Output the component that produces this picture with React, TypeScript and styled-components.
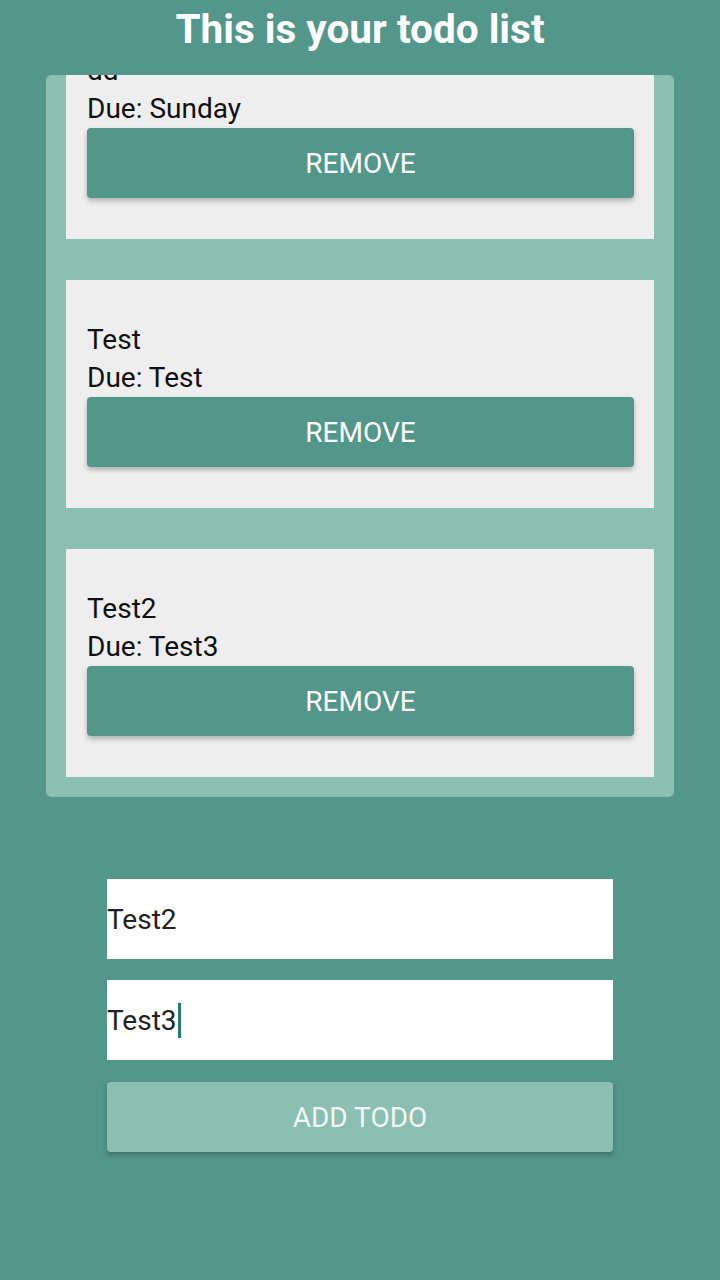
import React, { useLayoutEffect, useRef } from "react";
import styled, { createGlobalStyle } from "styled-components";

const Global = createGlobalStyle`
  html, body { margin: 0; padding: 0; background: #52978a; }
  body { font-family: Roboto, "Noto Sans", sans-serif; }
  * { box-sizing: border-box; }
`;

const Page = styled.div`
  width: 720px;
  height: 1280px;
  background: #52978a;
  display: flex;
  flex-direction: column;
  align-items: center;
  overflow: hidden;
`;

const Title = styled.h1`
  margin: 0;
  height: 75px;
  padding-top: 5px;
  font-size: 40.5px;
  line-height: 48px;
  font-weight: 700;
  color: #ffffff;
  text-align: center;
`;

const Panel = styled.div`
  width: 628px;
  height: 722px;
  background: #8abfb1;
  border-radius: 5px;
  padding: 20px;
  overflow-y: auto;
  scrollbar-width: none;
  &::-webkit-scrollbar { display: none; }
  display: flex;
  flex-direction: column;
  gap: 41px;
`;

const Item = styled.div`
  flex: none;
  background: #eeeeee;
  padding: 41px 20px 41px 21px;
  display: flex;
  flex-direction: column;
`;

const Line = styled.div`
  font-size: 28px;
  line-height: 38px;
  color: #111;
`;

const Button = styled.button<{ $light?: boolean }>`
  border: none;
  border-radius: 4px;
  background: ${(p) => (p.$light ? "#8abfb1" : "#52978a")};
  color: ${(p) => (p.$light ? "#f2f7f5" : "#ffffff")};
  font-family: Roboto, "Noto Sans", sans-serif;
  font-size: 28px;
  height: ${(p) => (p.$light ? "70px" : "70px")};
  width: 100%;
  box-shadow: 0 3px 5px rgba(0, 0, 0, 0.25);
  margin-top: ${(p) => (p.$light ? "1px" : "0")};
`;

const Form = styled.div`
  margin-top: 82px;
  width: 506px;
  display: flex;
  flex-direction: column;
  gap: 21px;
`;

const Field = styled.div`
  height: 80px;
  background: #ffffff;
  display: flex;
  align-items: center;
  font-size: 28px;
  color: #222;
`;

const Caret = styled.span`
  display: inline-block;
  width: 3px;
  height: 35px;
  background: #1f7d6c;
  margin-left: 1px;
`;

const todos = [
  { name: "dd", due: "Sunday" },
  { name: "Test", due: "Test" },
  { name: "Test2", due: "Test3" },
];

export default function App() {
  const ref = useRef<HTMLDivElement>(null);
  useLayoutEffect(() => {
    if (ref.current) ref.current.scrollTop = ref.current.scrollHeight;
  }, []);
  return (
    <Page>
      <Global />
      <Title>This is your todo list</Title>
      <Panel ref={ref}>
        {todos.map((t, i) => (
          <Item key={i}>
            <Line>{t.name}</Line>
            <Line>Due: {t.due}</Line>
            <Button>REMOVE</Button>
          </Item>
        ))}
      </Panel>
      <Form>
        <Field>Test2</Field>
        <Field>
          Test3
          <Caret />
        </Field>
        <Button $light>ADD TODO</Button>
      </Form>
    </Page>
  );
}
